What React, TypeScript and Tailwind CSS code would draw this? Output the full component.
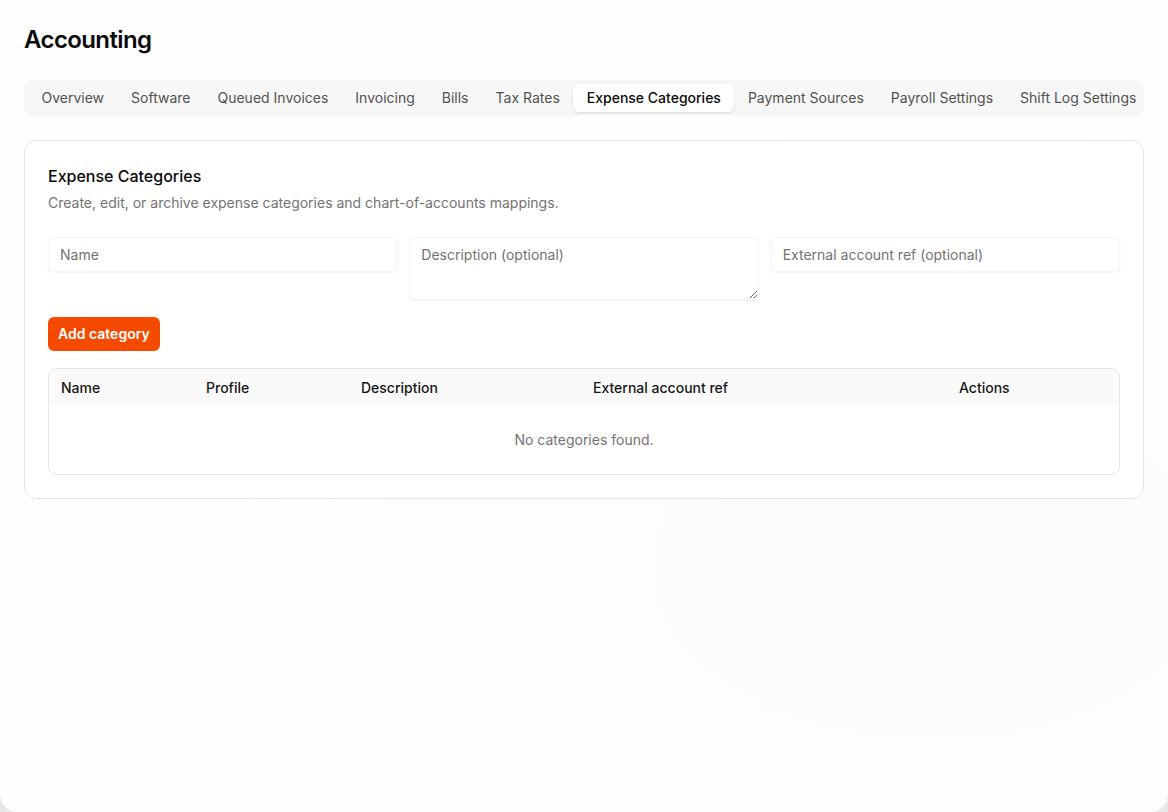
const tabs = [
  "Overview",
  "Software",
  "Queued Invoices",
  "Invoicing",
  "Bills",
  "Tax Rates",
  "Expense Categories",
  "Payment Sources",
  "Payroll Settings",
  "Shift Log Settings",
];

const columns = [
  { label: "Name", width: "w-[145px]" },
  { label: "Profile", width: "w-[155px]" },
  { label: "Description", width: "w-[232px]" },
  { label: "External account ref", width: "w-[366px]" },
  { label: "Actions", width: "" },
];

export default function App() {
  return (
    <div className="min-h-[812px] bg-[#e8e8e8] font-['Inter',sans-serif] text-neutral-950">
      <div className="h-[812px] overflow-hidden rounded-b-[18px] bg-[#fefefe] bg-[radial-gradient(ellipse_at_80%_70%,#fcfbfa_0%,#fefefe_60%)] px-6 pt-6">
        <h1 className="text-2xl font-semibold leading-8 tracking-tight">Accounting</h1>

        <div className="mt-6 flex h-9 items-center rounded-lg bg-neutral-100/80 p-1">
          {tabs.map((tab) => {
            const active = tab === "Expense Categories";
            return (
              <button
                key={tab}
                className={
                  active
                    ? "h-7 whitespace-nowrap rounded-md bg-white px-[13.5px] text-sm font-medium text-neutral-950 shadow-sm"
                    : "h-7 whitespace-nowrap rounded-md px-[13.5px] text-sm font-normal text-neutral-600"
                }
              >
                {tab}
              </button>
            );
          })}
        </div>

        <div className="mt-6 rounded-xl border border-neutral-200 bg-white p-[23px]">
          <h2 className="text-base font-medium leading-6">Expense Categories</h2>
          <p className="mt-[5px] text-sm leading-5 text-neutral-500">
            Create, edit, or archive expense categories and chart-of-accounts mappings.
          </p>

          <div className="mt-6 grid grid-cols-3 items-start gap-3">
            <input
              placeholder="Name"
              className="h-[35px] rounded-md border border-neutral-100 px-[11px] text-sm shadow-xs outline-none placeholder:text-neutral-500"
            />
            <textarea
              placeholder="Description (optional)"
              className="h-[63px] rounded-md border border-neutral-100 px-[11px] py-[7px] text-sm leading-5 shadow-xs outline-none placeholder:text-neutral-500"
            />
            <input
              placeholder="External account ref (optional)"
              className="h-[35px] rounded-md border border-neutral-100 px-[11px] text-sm shadow-xs outline-none placeholder:text-neutral-500"
            />
          </div>

          <button className="mt-[17px] h-[34px] rounded-md bg-orange-600 px-2.5 text-sm font-semibold text-white">
            Add category
          </button>

          <div className="mt-[17px] overflow-hidden rounded-lg border border-neutral-200">
            <div className="flex h-[37px] items-center bg-neutral-50 px-3 text-sm font-medium text-neutral-900">
              {columns.map((c) => (
                <div key={c.label} className={c.width}>
                  {c.label}
                </div>
              ))}
            </div>
            <div className="py-6 text-center text-sm leading-5 text-neutral-500">
              No categories found.
            </div>
          </div>
        </div>
      </div>
    </div>
  );
}
